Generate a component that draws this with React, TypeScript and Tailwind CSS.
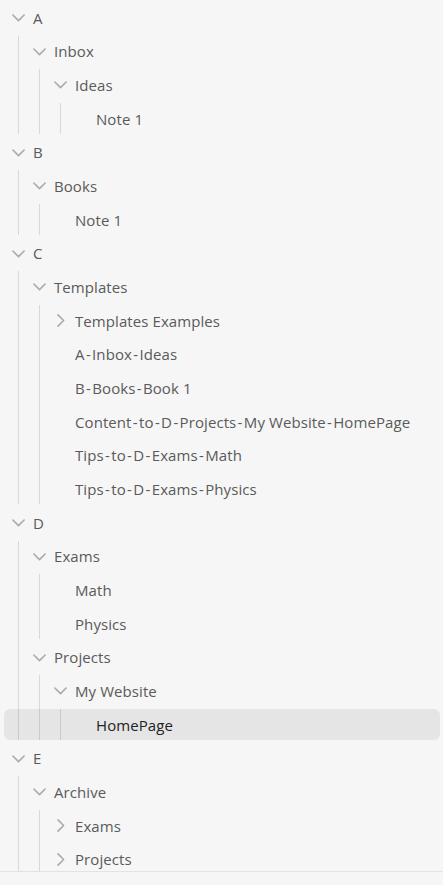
import React from "react";

type Node = {
  name: string;
  children?: Node[];
  open?: boolean;
  selected?: boolean;
};

const tree: Node[] = [
  {
    name: "A",
    open: true,
    children: [
      {
        name: "Inbox",
        open: true,
        children: [{ name: "Ideas", open: true, children: [{ name: "Note 1" }] }],
      },
    ],
  },
  {
    name: "B",
    open: true,
    children: [{ name: "Books", open: true, children: [{ name: "Note 1" }] }],
  },
  {
    name: "C",
    open: true,
    children: [
      {
        name: "Templates",
        open: true,
        children: [
          { name: "Templates Examples", open: false, children: [] },
          { name: "A-Inbox-Ideas" },
          { name: "B-Books-Book 1" },
          { name: "Content-to-D-Projects-My Website-HomePage" },
          { name: "Tips-to-D-Exams-Math" },
          { name: "Tips-to-D-Exams-Physics" },
        ],
      },
    ],
  },
  {
    name: "D",
    open: true,
    children: [
      {
        name: "Exams",
        open: true,
        children: [{ name: "Math" }, { name: "Physics" }],
      },
      {
        name: "Projects",
        open: true,
        children: [
          {
            name: "My Website",
            open: true,
            children: [{ name: "HomePage", selected: true }],
          },
        ],
      },
    ],
  },
  {
    name: "E",
    open: true,
    children: [
      {
        name: "Archive",
        open: true,
        children: [
          { name: "Exams", open: false, children: [] },
          { name: "Projects", open: false, children: [] },
        ],
      },
    ],
  },
];

function Chevron({ open }: { open: boolean }) {
  return (
    <svg
      width="15"
      height="15"
      viewBox="0 0 24 24"
      fill="none"
      stroke="#ababab"
      strokeWidth="2.6"
      strokeLinecap="round"
      strokeLinejoin="round"
      className={open ? "" : "-rotate-90"}
    >
      <path d="M3 8L12 17L21 8" />
    </svg>
  );
}

function Label({ text }: { text: string }) {
  const parts = text.split("-");
  return (
    <>
      {parts.map((p, i) => (
        <React.Fragment key={i}>
          {i > 0 && <span className="px-[1.3px]">-</span>}
          {p}
        </React.Fragment>
      ))}
    </>
  );
}

function Item({ node, depth }: { node: Node; depth: number }) {
  const isFolder = !!node.children;
  const rowBase =
    "flex items-center h-[31px] mb-[2.68px] rounded-[6px] whitespace-nowrap";
  let rowCls = depth === 0 ? "pl-[6px]" : "pl-[12px]";
  let textCls = "text-[#5a5a5a]";
  if (node.selected) {
    rowCls = "-ml-[57px] pl-[92px] bg-black/[0.065]";
    textCls = "text-[#222222]";
  }
  return (
    <div>
      <div className={`${rowBase} ${rowCls}`}>
        {isFolder ? (
          <div className="w-[16px] h-[16px] flex items-center justify-center mr-[7px] shrink-0">
            <Chevron open={!!node.open} />
          </div>
        ) : (
          !node.selected && <div className="w-[23px] shrink-0" />
        )}
        <span className={textCls}>
          <Label text={node.name} />
        </span>
      </div>
      {isFolder && node.open && node.children && node.children.length > 0 && (
        <div
          className={`border-l border-[#d9d9d9] ${
            depth === 0 ? "ml-[14px]" : "ml-[20px]"
          }`}
        >
          {node.children.map((c, i) => (
            <Item key={i} node={c} depth={depth + 1} />
          ))}
        </div>
      )}
    </div>
  );
}

export default function App() {
  return (
    <div
      className="w-[443px] h-[885px] bg-[#f6f6f6] flex flex-col text-[15px] leading-[20px] tracking-[0.08px]"
      style={{ fontFamily: '"Open Sans", "Noto Sans", sans-serif' }}
    >
      <div className="h-[872px] overflow-hidden border-b border-[#e3e3e3] pl-[4px] pr-[3px] pt-[2px] shrink-0">
        {tree.map((n, i) => (
          <Item key={i} node={n} depth={0} />
        ))}
      </div>
      <div className="flex-1" />
    </div>
  );
}
